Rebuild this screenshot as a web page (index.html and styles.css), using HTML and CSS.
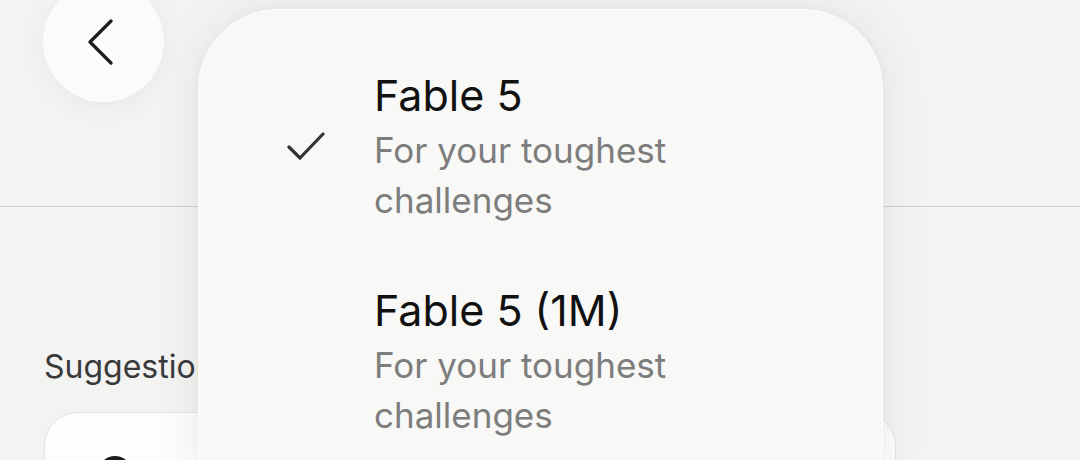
FILE: index.html
```html
<!DOCTYPE html>
<html lang="en">
<head>
    <meta charset="UTF-8">
    <meta name="viewport" content="width=device-width, initial-scale=1.0">
    <title>Model picker</title>
    <link rel="stylesheet" href="styles.css">
</head>
<body>
<div class="screen">
    <div class="topbar">
        <button class="back-btn" aria-label="Back">
            <svg width="28" height="46" viewBox="0 0 28 46" fill="none">
                <path d="M25 2 L4 23 L25 44" stroke="#1c1c1c" stroke-width="3.2" stroke-linecap="round" stroke-linejoin="round"/>
            </svg>
        </button>
    </div>

    <div class="divider"></div>

    <div class="section">
        <div class="section-title">Suggestions</div>
        <div class="suggest-card">
            <svg class="suggest-icon" width="40" height="40" viewBox="0 0 40 40" fill="none">
                <circle cx="20" cy="20" r="15" stroke="#1c1c1c" stroke-width="4"/>
            </svg>
        </div>
    </div>

    <!-- model dropdown -->
    <div class="menu">
        <div class="menu-item">
            <div class="check">
                <svg width="38" height="30" viewBox="0 0 38 30" fill="none">
                    <path d="M2 16 L13 27 L36 3" stroke="#333" stroke-width="3.2" stroke-linecap="round" stroke-linejoin="round"/>
                </svg>
            </div>
            <div class="item-text">
                <div class="item-title">Fable 5</div>
                <div class="item-sub">For your toughest<br>challenges</div>
            </div>
        </div>

        <div class="menu-item">
            <div class="check"></div>
            <div class="item-text">
                <div class="item-title">Fable 5 (1M)</div>
                <div class="item-sub">For your toughest<br>challenges</div>
            </div>
        </div>
    </div>
</div>
</body>
</html>
```

FILE: styles.css
```css
* {
    margin: 0;
    padding: 0;
    box-sizing: border-box;
}

body {
    font-family: 'Inter', 'Noto Sans', sans-serif;
    background: #f3f3f2;
    color: #111;
    width: 1080px;
    height: 460px;
    overflow: hidden;
}

.screen {
    position: relative;
    width: 1080px;
    height: 460px;
    overflow: hidden;
}

.topbar {
    display: flex;
    align-items: flex-start;
    height: 206px;
    padding-left: 43px;
}

.back-btn {
    width: 121px;
    height: 121px;
    margin-top: -19px;
    border: none;
    border-radius: 50%;
    background: #fbfbfa;
    box-shadow: 0 4px 24px rgba(0, 0, 0, 0.05);
    display: flex;
    align-items: center;
    justify-content: center;
    padding-right: 8px;
}

.divider {
    border-top: 1px solid #cfcfcd;
}

.section {
    padding: 0 184px 0 44px;
}

.section-title {
    font-size: 32px;
    line-height: 40px;
    color: #3a3a3a;
    margin-top: 140px;
}

.suggest-card {
    margin-top: 25px;
    height: 120px;
    background: #fdfdfc;
    border: 1px solid #e4e4e2;
    border-radius: 34px;
    padding: 40px 0 0 50px;
}

.suggest-icon {
    display: block;
}

.menu {
    position: absolute;
    left: 198px;
    top: 9px;
    width: 685px;
    height: 520px;
    background: #f8f8f7;
    border: 1px solid #fdfdfc;
    border-radius: 80px;
    box-shadow: 0 0 50px rgba(0, 0, 0, 0.07), 0 0 12px rgba(0, 0, 0, 0.03);
    padding-top: 60px;
    display: flex;
    flex-direction: column;
    gap: 60px;
}

.menu-item {
    display: flex;
    align-items: center;
}

.check {
    width: 175px;
    padding-left: 88px;
    padding-bottom: 4px;
}

.check svg {
    display: block;
}

.item-title {
    font-size: 43px;
    line-height: 50px;
    color: #111;
}

.item-sub {
    font-size: 35px;
    line-height: 50px;
    margin-top: 5px;
    color: #7d7d7d;
}
```
